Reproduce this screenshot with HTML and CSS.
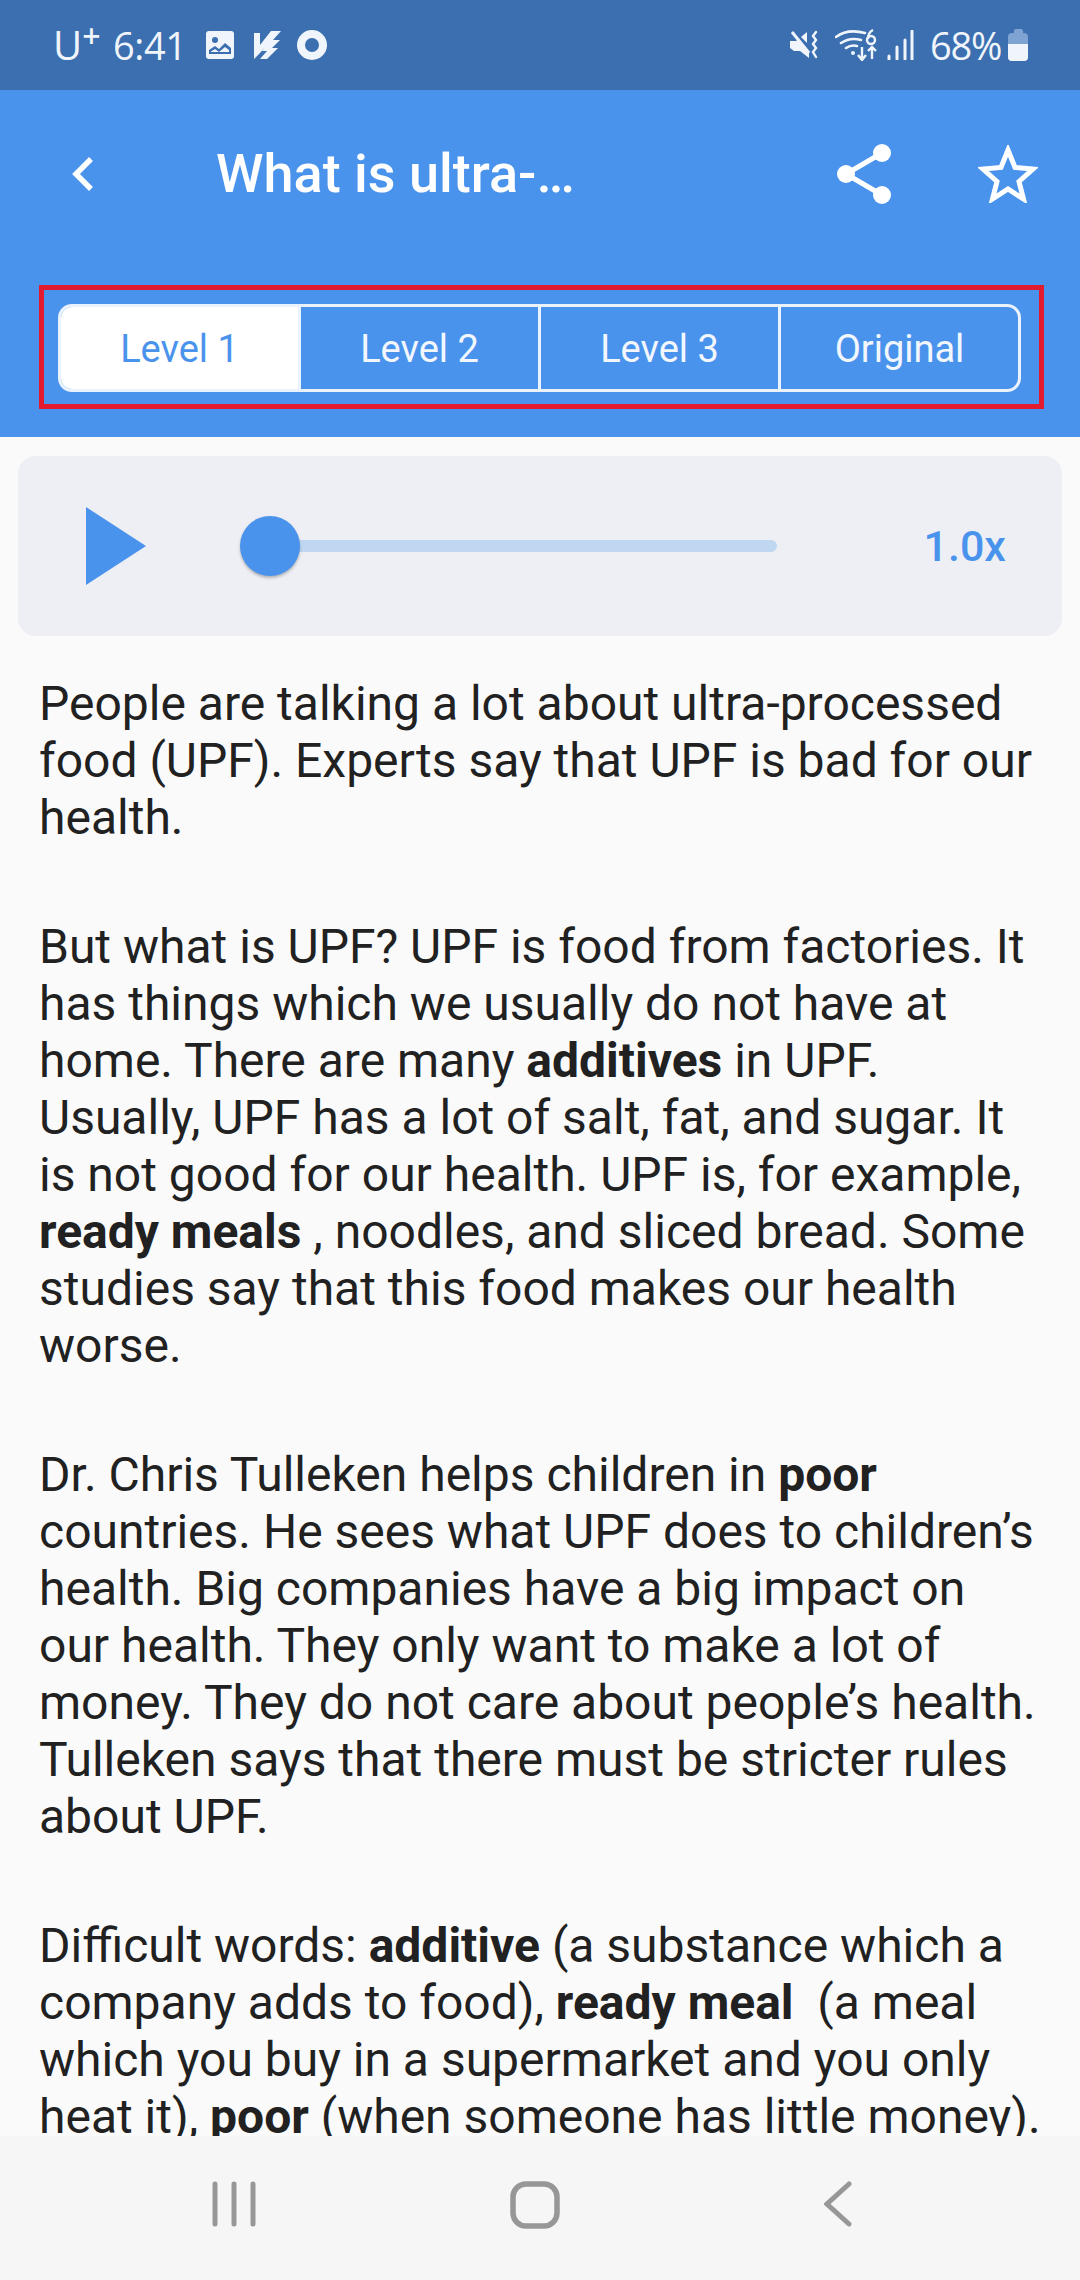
FILE: index.html
```html
<!DOCTYPE html>
<html lang="en">
<head>
  <meta charset="UTF-8">
  <meta name="viewport" content="width=device-width, initial-scale=1.0">
  <title>What is ultra-processed food?</title>
  <link rel="stylesheet" href="styles.css">
</head>
<body>
  <div class="screen">
    <!-- status bar -->
    <div class="status-bar">
      <div class="status-left">
        <span class="carrier">U<sup>+</sup></span>
        <span class="clock">6:41</span>
        <svg class="st-icon" width="28" height="28" viewBox="0 0 28 28">
          <rect width="28" height="28" rx="3" fill="#f0f5fb"/>
          <circle cx="9" cy="9" r="3" fill="#3b6fb0"/>
          <path d="M3 23v-4l6-4 4 3 6-6 6 5v6zM5 21h18v-2l-4-3-6 5-4-3-4 2.6z" fill="#3b6fb0"/>
        </svg>
        <svg class="st-icon st-bolt" width="27" height="28" viewBox="0 0 27 28">
          <path d="M0 2h6v12L17 0h10l-8 9h7l-8 8h6L13 28H6l7-8H8l3-4-5 6v0L0 28z" fill="#f0f5fb"/>
        </svg>
        <svg width="30" height="30" viewBox="0 0 30 30">
          <circle cx="15" cy="15" r="11" fill="none" stroke="#f0f5fb" stroke-width="8"/>
        </svg>
      </div>
      <div class="status-right">
        <svg width="30" height="30" viewBox="0 0 30 30">
          <path d="M0 11h6l3-2 10 12v7l-9-7H4l-4-3z" fill="#f0f5fb"/>
          <path d="M11 7l6-5v11z" fill="#f0f5fb"/>
          <path d="M2 2l17 21" stroke="#f0f5fb" stroke-width="3"/>
          <path d="M26 2l-3 4 3 4-3 4 3 4-3 4 3 5" fill="none" stroke="#f0f5fb" stroke-width="2.4" stroke-linecap="round"/>
        </svg>
        <svg class="wifi" width="43" height="32" viewBox="0 0 43 32">
          <path d="M1 8c8-6 18-7 29-4M6 14c6-4 13-5 20-3M11 19c3-2 7-3 11-2" fill="none" stroke="#f0f5fb" stroke-width="2.6" stroke-linecap="round"/>
          <circle cx="18" cy="24" r="2" fill="#f0f5fb"/>
          <circle cx="36" cy="11" r="4" fill="none" stroke="#f0f5fb" stroke-width="2.4"/>
          <path d="M33 10c0-4 1-7 5-9" fill="none" stroke="#f0f5fb" stroke-width="2.4"/>
          <path d="M27 18v12M23 26l4 5 4-5M37 30V19M33 22l4-4 4 4" fill="none" stroke="#f0f5fb" stroke-width="2.4"/>
        </svg>
        <svg class="signal" width="27" height="30" viewBox="0 0 27 30">
          <path d="M2 26v3M10 17v12M18 10v19M25 1v28" stroke="#f0f5fb" stroke-width="3" stroke-linecap="round"/>
        </svg>
        <span class="battery-pct">68%</span>
        <div class="battery">
          <div class="battery-cap"></div>
          <div class="battery-body"><div class="battery-fill"></div></div>
        </div>
      </div>
    </div>

    <!-- app header -->
    <div class="header">
      <div class="toolbar">
        <svg class="back" width="22" height="36" viewBox="0 0 22 36">
          <path d="M19 3L4 18l15 15" fill="none" stroke="#fff" stroke-width="5.5"/>
        </svg>
        <div class="title">What is ultra-…</div>
        <svg class="share" width="54" height="60" viewBox="0 0 54 60">
          <path d="M45 9L9 30l36 21" fill="none" stroke="#fff" stroke-width="5"/>
          <circle cx="45" cy="9" r="9" fill="#fff"/>
          <circle cx="9" cy="30" r="9" fill="#fff"/>
          <circle cx="45" cy="51" r="9" fill="#fff"/>
        </svg>
        <svg class="star" width="60" height="58" viewBox="0 0 60 58">
          <path d="M30 5l7 17.500 18 1.500-14 12.500 4.500 17.500L30 44l-15.500 10L19 36.500 5 24l18-1.500z" fill="none" stroke="#fff" stroke-width="5"/>
        </svg>
      </div>
      <div class="level-frame">
        <div class="levels">
          <div class="level active">Level 1</div>
          <div class="level">Level 2</div>
          <div class="level">Level 3</div>
          <div class="level">Original</div>
        </div>
      </div>
    </div>

    <!-- audio player -->
    <div class="player">
      <svg class="play" width="60" height="78" viewBox="0 0 60 78">
        <path d="M0 0l60 39L0 78z" fill="#4a93ec"/>
      </svg>
      <div class="track">
        <div class="thumb"></div>
      </div>
      <div class="speed">1.0x</div>
    </div>

    <!-- article -->
    <div class="article">
      <p>People are talking a lot about ultra-processed food (UPF). Experts say that UPF is bad for our health.</p>
      <p>But what is UPF? UPF is food from factories. It has things which we usually do not have at home. There are many <b>additives</b> in UPF. Usually, UPF has a lot of salt, fat, and sugar. It is not good for our health. UPF is, for example, <b>ready meals</b> , noodles, and sliced bread. Some studies say that this food makes our health worse.</p>
      <p>Dr. Chris Tulleken helps children in <b>poor</b> countries. He sees what UPF does to children’s health. Big companies have a big impact on our health. They only want to make a lot of money. They do not care about people’s health. Tulleken says that there must be stricter rules about UPF.</p>
      <p>Difficult words: <b>additive</b> (a substance which a company adds to food), <b>ready meal</b>&nbsp; (a meal which you buy in a supermarket and you only heat it), <b>poor</b> (when someone has little money).</p>
    </div>

    <!-- navigation bar -->
    <div class="nav-bar">
      <svg width="44" height="46" viewBox="0 0 44 46">
        <path d="M3 3v40M22 3v40M41 3v40" stroke="#979797" stroke-width="5" stroke-linecap="round"/>
      </svg>
      <svg class="nav-home" width="50" height="48" viewBox="0 0 50 48">
        <rect x="3" y="3" width="44" height="42" rx="13" fill="none" stroke="#979797" stroke-width="5.500"/>
      </svg>
      <svg class="nav-back" width="28" height="46" viewBox="0 0 28 46">
        <path d="M25 3L3 23l22 20" fill="none" stroke="#979797" stroke-width="5" stroke-linecap="round"/>
      </svg>
    </div>
  </div>
</body>
</html>
```

FILE: styles.css
```css
body {
  margin: 0;
  font-family: Roboto, "Noto Sans", sans-serif;
  background-color: #fafafa;
}
svg {
  display: block;
  flex: none;
}
.screen {
  width: 1080px;
  height: 2280px;
  display: flex;
  flex-direction: column;
  overflow: hidden;
}

/* status bar */
.status-bar {
  height: 90px;
  flex: none;
  box-sizing: border-box;
  padding: 0 52px 0 53px;
  display: flex;
  justify-content: space-between;
  align-items: center;
  background-color: #3b6fb0;
  color: #f0f5fb;
}
.status-left, .status-right {
  display: flex;
  align-items: center;
}
.carrier {
  font-family: "Open Sans", sans-serif;
  font-size: 40px;
  font-weight: 500;
  line-height: 44px;
  width: 60px;
}
.carrier sup {
  font-size: 32px;
  font-weight: 600;
  line-height: 0;
  vertical-align: 12px;
}
.clock {
  font-family: "Open Sans", sans-serif;
  font-size: 38px;
  letter-spacing: -0.4px;
  line-height: 44px;
  width: 93px;
}
.st-icon {
  margin-right: 20px;
}
.st-bolt {
  margin-right: 16px;
}
.wifi {
  margin-left: 15px;
}
.signal {
  margin-left: 9px;
}
.battery-pct {
  font-family: "Open Sans", sans-serif;
  font-size: 38px;
  letter-spacing: -1.3px;
  line-height: 44px;
  margin-left: 16px;
  margin-right: 7px;
}
.battery {
  width: 20px;
  display: flex;
  flex-direction: column;
  align-items: center;
}
.battery-cap {
  width: 9px;
  height: 4px;
  border-radius: 2px 2px 0 0;
  background-color: #7fa3d3;
}
.battery-body {
  width: 20px;
  height: 28px;
  border-radius: 4px;
  background-color: #7fa3d3;
  display: flex;
  align-items: flex-end;
  overflow: hidden;
}
.battery-fill {
  width: 100%;
  height: 60%;
  background-color: #f0f5fb;
}

/* header */
.header {
  height: 347px;
  flex: none;
  box-sizing: border-box;
  padding: 54px 36px 0 39px;
  background-color: #4a93ec;
}
.toolbar {
  display: flex;
  align-items: center;
  height: 60px;
  margin-bottom: 81px;
  color: #fff;
}
.back {
  margin-left: 33px;
}
.title {
  font-size: 54px;
  font-weight: 500;
  line-height: 62px;
  margin-left: 122px;
  flex: 1;
}
.share {
  margin-right: 87px;
}
.star {
  margin-right: 6px;
}
.level-frame {
  border: 5px solid #e31b2f;
  padding: 14px 18px 12px 14px;
}
.levels {
  display: flex;
  height: 88px;
  box-sizing: border-box;
  border: 3px solid #eaf2fd;
  border-radius: 14px;
  overflow: hidden;
}
.level {
  flex: 1;
  display: flex;
  align-items: center;
  justify-content: center;
  padding-top: 2px;
  font-size: 38px;
  color: #f2f7fe;
  border-left: 3px solid #eaf2fd;
}
.level:first-child {
  border-left: none;
}
.level.active {
  background-color: #fff;
  color: #4a93ec;
}

/* player */
.player {
  height: 180px;
  flex: none;
  margin: 19px 18px 0;
  padding: 0 56px 0 68px;
  display: flex;
  align-items: center;
  background-color: #eeeff5;
  border-radius: 18px;
}
.track {
  width: 537px;
  height: 12px;
  margin-left: 94px;
  border-radius: 6px;
  background-color: #c0d7f2;
  display: flex;
  align-items: center;
}
.thumb {
  width: 60px;
  height: 60px;
  flex: none;
  border-radius: 50%;
  background-color: #4a93ec;
  box-shadow: 0 2px 3px rgba(0, 0, 0, 0.25);
}
.speed {
  margin-left: auto;
  font-size: 43px;
  font-weight: 500;
  color: #4a93ec;
}

/* article text */
.article {
  flex: 1;
  min-height: 0;
  overflow: hidden;
  padding: 39px 36px 0 39px;
  font-size: 48px;
  line-height: 57px;
  color: #212121;
}
.article p {
  margin: 0 0 72px;
}
.article b {
  font-weight: 700;
}

/* bottom navigation */
.nav-bar {
  height: 144px;
  flex: none;
  box-sizing: border-box;
  padding: 45px 0 0 212px;
  display: flex;
  align-items: flex-start;
  background-color: #f6f6f6;
}
.nav-home {
  margin-left: 254px;
}
.nav-back {
  margin-left: 264px;
}
```
